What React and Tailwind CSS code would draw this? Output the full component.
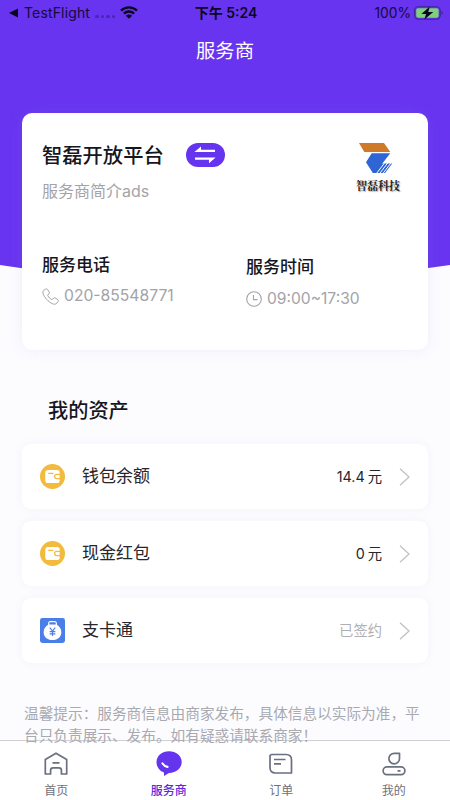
const assets = [
  { id: 1, icon: "wallet", name: "钱包余额", value: "14.4", unit: "元" },
  { id: 2, icon: "wallet", name: "现金红包", value: "0", unit: "元" },
  { id: 3, icon: "card", name: "支卡通", status: "已签约" }
];

function WalletIcon() {
  return (
    <svg width="25" height="25" viewBox="0 0 26 26">
      <circle cx="13" cy="13" r="13" fill="#f2bb3e" />
      <rect x="5.500" y="6.200" width="15" height="13.600" rx="3" fill="#fff" />
      <path d="M9 9.700h4.500" stroke="#f2bb3e" strokeWidth="1.200" strokeLinecap="round" />
      <path
        d="M21 10.800h-3.600a2.200 2.200 0 0 0 0 4.400H21z"
        fill="#fff"
        stroke="#f2bb3e"
        strokeWidth="1.300"
      />
    </svg>
  );
}

function CardIcon() {
  return (
    <svg width="25" height="25" viewBox="0 0 26 26">
      <rect width="26" height="26" rx="2.500" fill="#4a7fea" />
      <path d="M9 7.200V5.400a1.600 1.600 0 0 1 1.600-1.600h4.800A1.600 1.600 0 0 1 17 5.400v1.800" fill="none" stroke="#fff" strokeWidth="1.200" />
      <path d="M8.800 6.800h8.400c3 1.600 5 4.600 5 8 0 5-3.700 8.100-9.200 8.100s-9.200-3.100-9.200-8.100c0-3.400 2-6.400 5-8z" fill="#fff" />
      <path
        d="M10.200 10l2.800 3.600 2.800-3.600M13 13.600v5.200M10 14.100h6M10 16.500h6"
        fill="none"
        stroke="#4a7fea"
        strokeWidth="1.200"
      />
    </svg>
  );
}

function StatusBar() {
  return (
    <div className="grid h-[26px] shrink-0 grid-cols-3 items-center pl-[9px] pr-[7px] text-[13.500px] text-[#150a3c]">
      <div className="flex items-center">
        <svg width="9" height="10" viewBox="0 0 9 10">
          <path d="M9 .5v9L0 5z" fill="#0b0620" />
        </svg>
        <span className="-mt-px ml-[6px] text-[14px] tracking-[0.150px]">TestFlight</span>
        <span className="ml-[5px] mt-[6px] flex gap-[2px]">
          {[0, 1, 2, 3].map((n) => (
            <i key={n} className="h-[3px] w-[3.500px] rounded-full bg-[#4a24b8]" />
          ))}
        </span>
        <svg className="-mt-px ml-[5px]" width="18" height="13" viewBox="0 0 18 13">
          <path
            d="M1 4.600a11.400 11.400 0 0 1 16 0M3.900 7.600a7.200 7.200 0 0 1 10.200 0"
            fill="none"
            stroke="#0b0620"
            strokeWidth="2.300"
          />
          <path d="M9 12.800L5.900 9.700a4.400 4.400 0 0 1 6.200 0z" fill="#0b0620" />
        </svg>
      </div>
      <div className="-mt-[2px] text-center text-[14px] font-semibold text-[#0b0620]">下午 5:24</div>
      <div className="flex items-center justify-end">
        <span className="text-[13.800px]">100%</span>
        <svg className="-mt-px ml-[3px]" width="29" height="14" viewBox="0 0 29 14">
          <rect x=".6" y=".8" width="25.600" height="12.400" rx="3.600" fill="none" stroke="#3b2691" strokeWidth="1.100" />
          <rect x="2.200" y="2.300" width="22.400" height="9.400" rx="2" fill="#7ed07c" />
          <path d="M27.500 5v4c.8-.3 1.200-1.100 1.200-2s-.4-1.700-1.200-2z" fill="#3b2691" />
          <path d="M15.800.4L7.400 7.900h4.600l-1.600 5.700 8.900-7.700h-5z" fill="#0b0620" />
        </svg>
      </div>
    </div>
  );
}

function ProviderCard() {
  return (
    <div className="mx-[22px] mt-[42px] h-[237px] shrink-0 rounded-[10px] bg-white px-5 shadow-[0_0_14px_rgba(150,140,220,0.140)]">
      <div className="flex justify-between">
        <div className="pt-7">
          <div className="flex h-7 items-center">
            <h2 className="mt-[2px] text-[20.300px] font-medium text-[#16161f]">智磊开放平台</h2>
            <span className="ml-[22px] flex h-6 w-[39px] items-center justify-center rounded-full bg-[#6534ee]">
              <svg width="22" height="18" viewBox="0 0 22 18">
                <path
                  d="M.4 5.900L7 .5v3.200h14v2.200zM21.600 11.500L15 17.300v-3.500H1v-2.300z"
                  fill="#fff"
                />
              </svg>
            </span>
          </div>
          <p className="mt-[10px] text-[16px] leading-6 text-[#a3a3a8]">服务商简介ads</p>
        </div>

        {/* Logo */}
        <div className="mr-[6px] mt-[29px] flex w-[48px] flex-col items-center">
          <svg width="38" height="34" viewBox="0 0 38 34">
            <path d="M0 1h25l6.300 8.900h-26z" fill="#cf7a2b" />
            <path d="M12.700 11.300h18.600L23.500 21.300 16 31h-2.200L7 20.200z" fill="#2f65d4" />
            <path d="M22.500 21.500h10.700L26 31H14.500z" fill="#2f65d4" />
            <path d="M17.500 31.500l8-10.500M20.700 31.500l8-10.500M23.900 31.500l8-10.500" stroke="#fff" strokeWidth="1" />
          </svg>
          <span className="mt-[2px] whitespace-nowrap font-['Noto_Serif_CJK_SC','Noto_Sans_CJK_SC',serif] text-[11px] font-bold leading-[14px] text-[#1c1c1c] [text-shadow:1px_1px_1px_#aaa]">
            智磊科技
          </span>
        </div>
      </div>

      <div className="mt-[50px] flex">
        <div className="w-[204px]">
          <h3 className="text-[17px] font-medium leading-6 text-[#16161f]">服务电话</h3>
          <p className="mt-[7px] flex h-6 items-center text-[15.700px] text-[#a3a3a8]">
            <svg className="mr-[5px]" width="17" height="17" viewBox="0 0 17 17">
              <path
                d="M3.800 1L1.600 2.500C.3 3.700.8 6 2.500 8.600c2 3 4.700 5.500 7.400 6.900 2 1 3.800 1 4.900-.3l1.400-1.900c.4-.6.300-1.100-.3-1.500l-2.800-1.900c-.6-.4-1.100-.3-1.500.2l-1 1.200c-.4.4-.8.400-1.300.1-1.500-.9-2.700-2.200-3.500-3.600-.3-.5-.2-.9.200-1.200l1.100-.9c.5-.4.600-.9.200-1.500L5.400 1.300C5 .7 4.400.600 3.800 1z"
                fill="none"
                stroke="#a3a3a8"
                strokeWidth="1"
              />
            </svg>
            020-85548771
          </p>
        </div>
        <div className="pt-[2px]">
          <h3 className="text-[17px] font-medium leading-6 text-[#16161f]">服务时间</h3>
          <p className="mt-[8px] flex h-6 items-center text-[15.600px] text-[#a3a3a8]">
            <svg className="mr-[5px]" width="16" height="16" viewBox="0 0 16 16">
              <circle cx="8" cy="8" r="7.300" fill="none" stroke="#a3a3a8" strokeWidth="1.100" />
              <path d="M7.500 4v4.600h4" fill="none" stroke="#a3a3a8" strokeWidth="1.100" />
            </svg>
            09:00~17:30
          </p>
        </div>
      </div>
    </div>
  );
}

function AssetRow({ item }) {
  return (
    <div className="flex h-[65px] items-center rounded-[9px] bg-white pl-[18px] pr-[18px] shadow-[0_0_10px_rgba(110,110,150,0.060)]">
      {item.icon === "wallet" ? <WalletIcon /> : <CardIcon />}
      <span className="ml-[17px] mt-px text-[17px] text-[#26262c]">{item.name}</span>
      <span className="ml-auto flex items-center text-[14.300px]">
        {item.status ? (
          <span className="text-[#b0b0b4]">{item.status}</span>
        ) : (
          <span className="text-[#26262c]">
            {item.value}
            <span className="ml-[3px]">{item.unit}</span>
          </span>
        )}
      </span>
      <svg className="ml-[17px]" width="11" height="18" viewBox="0 0 11 18">
        <path d="M1 .8l9 8.200-9 8.200" fill="none" stroke="#c2c2c6" strokeWidth="1.300" />
      </svg>
    </div>
  );
}

function TabItem({ label, active, children }) {
  return (
    <div
      className={
        active
          ? "flex flex-col items-center font-medium text-[#5b2bd9]"
          : "flex flex-col items-center text-[#6f6f7a]"
      }
    >
      <svg className="mt-[9px]" width="28" height="28" viewBox="0 0 28 28" fill="none">
        {children}
      </svg>
      <span className="mt-[4px] text-[12px] leading-[18px]">{label}</span>
    </div>
  );
}

export default function App() {
  return (
    <div className="relative flex h-[800px] w-[450px] flex-col overflow-hidden bg-[#fcfcff] font-['Inter','Noto_Sans_CJK_SC',sans-serif]">
      {/* Curved header background */}
      <svg className="absolute left-0 top-0" width="450" height="290" viewBox="0 0 450 290">
        <path d="M0 0h450v265Q225 300 0 265z" fill="#6834f0" />
      </svg>

      <div className="relative z-10 flex min-h-0 flex-1 flex-col">
        <StatusBar />
        <h1 className="mt-[11px] h-[34px] shrink-0 text-center text-[19.300px] leading-[28px] text-white">服务商</h1>
        <ProviderCard />

        <h2 className="ml-[48px] mt-[47px] shrink-0 text-[20.200px] font-medium leading-7 text-[#16161f]">我的资产</h2>

        <div className="mx-[22px] mt-[19px] flex shrink-0 flex-col gap-3">
          {assets.map((item) => (
            <AssetRow key={item.id} item={item} />
          ))}
        </div>

        <p className="ml-[24px] mt-[41px] shrink-0 whitespace-nowrap text-[14.660px] leading-[21.500px] text-[#a9a9b0]">
          温馨提示：服务商信息由商家发布，具体信息以实际为准，平
          <br />
          台只负责展示、发布。如有疑惑请联系商家！
        </p>
      </div>

      {/* Tab bar */}
      <div className="relative grid h-[60px] shrink-0 grid-cols-4 border-t border-[#cfcfd4] bg-white">
        <TabItem label="首页">
          <path
            d="M3.300 9.500L14 3.200l10.700 6.300v14.500h-5.300v-3.700a2.400 2.400 0 0 0-2.400-2.400h-6a2.400 2.400 0 0 0-2.400 2.400v3.700H3.300zM10.500 12.800h7"
            stroke="#6b7080"
            strokeWidth="1.700"
            strokeLinejoin="round"
          />
        </TabItem>
        <TabItem label="服务商" active>
          <path
            d="M14 1.200C7 1.200 1.500 5.600 1.500 12c0 5 3 9 7.500 10.500V26l5-3c7.500-.5 12.700-4.700 12.700-11C26.700 5.600 21 1.200 14 1.200z"
            fill="#6534ee"
          />
          <path d="M7.500 13.500c1.500 2.200 3 3.200 5 3.400" stroke="#fff" strokeWidth="2.200" strokeLinecap="round" />
        </TabItem>
        <TabItem label="订单">
          <path
            d="M5 4.500h14c3.400 0 5.500 2.100 5.500 5.500v13H8.500C5.100 23 3 20.900 3 17.500v-11c0-1.200.8-2 2-2zM7 9.500h11.500M7 13.800h7"
            stroke="#6b7080"
            strokeWidth="1.700"
            strokeLinejoin="round"
          />
        </TabItem>
        <TabItem label="我的">
          <path
            d="M14.500 3.300h5v5.500a5.300 5.300 0 1 1-5-5.500zM7 16.900h14a3.900 3.900 0 0 1 0 7.800H7a3.900 3.900 0 0 1 0-7.800zM17.500 20.800h3"
            stroke="#6b7080"
            strokeWidth="1.700"
            strokeLinejoin="round"
          />
        </TabItem>
      </div>
    </div>
  );
}
